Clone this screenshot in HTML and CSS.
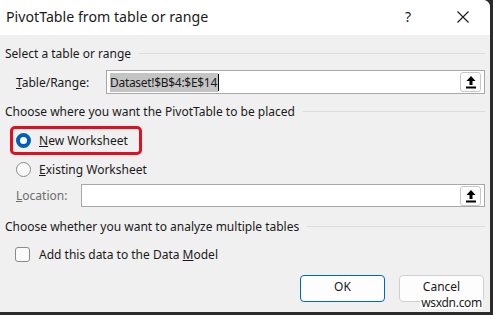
FILE: index.html
```html
<!DOCTYPE html>
<html>
<head>
<meta charset="utf-8">
<link rel="stylesheet" href="styles.css">
</head>
<body>
<div class="dialog">
  <div class="titlebar">
    <span class="title">PivotTable from table or range</span>
    <span class="help">?</span>
    <span class="close"><svg width="12" height="12" viewBox="0 0 12 12"><path d="M0.5 0.5 L11.5 11.5 M11.5 0.5 L0.5 11.5" stroke="#1a1a1a" stroke-width="1.1" fill="none"/></svg></span>
  </div>
  <div class="content">
    <div class="group-head"><span>Select a table or range</span><i class="rule"></i></div>
    <div class="field-row">
      <span class="label label-table"><u>T</u>able/Range:</span>
      <div class="input input-table">
        <span class="sel">Dataset!$B$4:$E$14</span><i class="caret"></i>
        <span class="pick"><svg width="12" height="14" viewBox="0 0 12 14"><path d="M6 1 L10.5 6 L7.5 6 L7.5 10 L4.5 10 L4.5 6 L1.5 6 Z" fill="#000"/><rect x="1" y="11.5" width="10" height="2" fill="#000"/></svg></span>
      </div>
    </div>
    <div class="group-head head2"><span>Choose where you want the PivotTable to be placed</span><i class="rule"></i></div>
    <div class="radio-row first">
      <div class="highlight">
        <span class="radio on"></span><span><u>N</u>ew Worksheet</span>
      </div>
    </div>
    <div class="radio-row second">
      <span class="radio"></span><span><u>E</u>xisting Worksheet</span>
    </div>
    <div class="field-row loc-row">
      <span class="label label-loc disabled"><u>L</u>ocation:</span>
      <div class="input input-loc">
        <span class="pick"><svg width="12" height="14" viewBox="0 0 12 14"><path d="M6 1 L10.5 6 L7.5 6 L7.5 10 L4.5 10 L4.5 6 L1.5 6 Z" fill="#000"/><rect x="1" y="11.5" width="10" height="2" fill="#000"/></svg></span>
      </div>
    </div>
    <div class="group-head head3"><span>Choose whether you want to analyze multiple tables</span><i class="rule"></i></div>
    <div class="check-row">
      <span class="checkbox"></span><span>Add this data to the Data <u>M</u>odel</span>
    </div>
    <div class="buttons">
      <button class="btn primary">OK</button>
      <button class="btn">Cancel</button>
    </div>
  </div>
  <span class="watermark">wsxdn.com</span>
</div>
</body>
</html>
```

FILE: styles.css
```css
html, body {
  margin: 0;
  padding: 0;
}
body {
  width: 493px;
  height: 315px;
  background: #2b2b2b;
  font-family: "Noto Sans", "Open Sans", sans-serif;
  font-size: 12px;
  color: #1a1a1a;
  overflow: hidden;
}
.dialog {
  position: relative;
  width: 490px;
  height: 312px;
  background: #f0f0f0;
  border-top-right-radius: 7px;
  display: flex;
  flex-direction: column;
}
.titlebar {
  height: 35px;
  background: #ffffff;
  border-top-right-radius: 7px;
  display: flex;
  align-items: center;
  padding-left: 6px;
}
.title {
  font-size: 14.2px;
  flex: 1;
  padding-bottom: 2px;
}
.help {
  font-size: 14px;
  width: 20px;
  margin-right: 32px;
  padding-bottom: 2px;
}
.close {
  width: 33px;
  display: flex;
  padding-bottom: 2px;
}
.content {
  display: flex;
  flex-direction: column;
  padding: 0 5px 0 5px;
}
.group-head {
  display: flex;
  align-items: center;
  height: 18px;
  margin-top: 9px;
}
.rule {
  flex: 1;
  height: 1px;
  background: #dcdcdc;
  margin-left: 8px;
  margin-right: 0;
}
.field-row {
  display: flex;
  align-items: center;
  margin-top: 8px;
}
.label {
  padding-left: 11px;
}
.label-table { width: 90px; }
.label-loc { width: 65px; }
.disabled { color: #6d6d6d; }
.input {
  flex: 1;
  background: #ffffff;
  border: 1px solid #a8a8a8;
  height: 22px;
  display: flex;
  align-items: center;
  position: relative;
}
.sel {
  background: #c4c4c4;
  margin-left: 3px;
  line-height: 19px;
  padding-right: 1px;
  letter-spacing: -0.3px;
}
.caret {
  width: 1px;
  height: 17px;
  background: #000;
}
.pick {
  position: absolute;
  right: 3px;
  top: 1px;
  width: 21px;
  height: 20px;
  border: 1px solid #c8c8c8;
  border-radius: 3px;
  background: #fdfdfd;
  box-sizing: border-box;
  display: flex;
  align-items: center;
  justify-content: center;
}
.head2 { margin-top: 8px; }
.radio-row {
  display: flex;
  align-items: center;
}
.radio-row.first {
  margin-top: 6px;
  margin-left: 5px;
}
.highlight {
  display: flex;
  align-items: center;
  box-sizing: border-box;
  width: 132px;
  height: 29px;
  border: 3px solid #e01020;
  border-radius: 5px;
  padding-left: 3px;
}
.radio-row.second {
  height: 20px;
  padding-left: 11px;
  margin-top: 4px;
}
.radio {
  width: 15px;
  height: 15px;
  border-radius: 50%;
  border: 1px solid #8a8a8a;
  background: #fafafa;
  box-sizing: border-box;
  margin-right: 8px;
  flex: none;
}
.radio.on {
  border: 4.5px solid #005fb8;
  background: #ffffff;
}
.loc-row { margin-top: 5px; }
.input-loc { height: 21px; }
.head3 { margin-top: 10px; }
.check-row {
  display: flex;
  align-items: center;
  height: 18px;
  padding-left: 10px;
  margin-top: 10px;
}
.checkbox {
  width: 15px;
  height: 15px;
  border: 1px solid #8a8a8a;
  border-radius: 3px;
  box-sizing: border-box;
  background: #fafafa;
  margin-right: 9px;
}
.buttons {
  display: flex;
  justify-content: flex-end;
  gap: 14px;
  margin-top: 12px;
  padding-right: 1px;
}
.btn {
  width: 85px;
  height: 27px;
  font-family: inherit;
  font-size: 12px;
  line-height: 14px;
  padding: 0 0 3px 0;
  color: #1a1a1a;
  background: #fdfdfd;
  border: 1px solid #d0d0d0;
  border-radius: 4px;
}
.btn.primary {
  border: 1px solid #0067c0;
}
.watermark {
  position: absolute;
  right: 7px;
  bottom: 3px;
  background: #ffffff;
  font-size: 12px;
  line-height: 12px;
  color: #222;
  padding: 0 1px;
  letter-spacing: -0.3px;
}
```
